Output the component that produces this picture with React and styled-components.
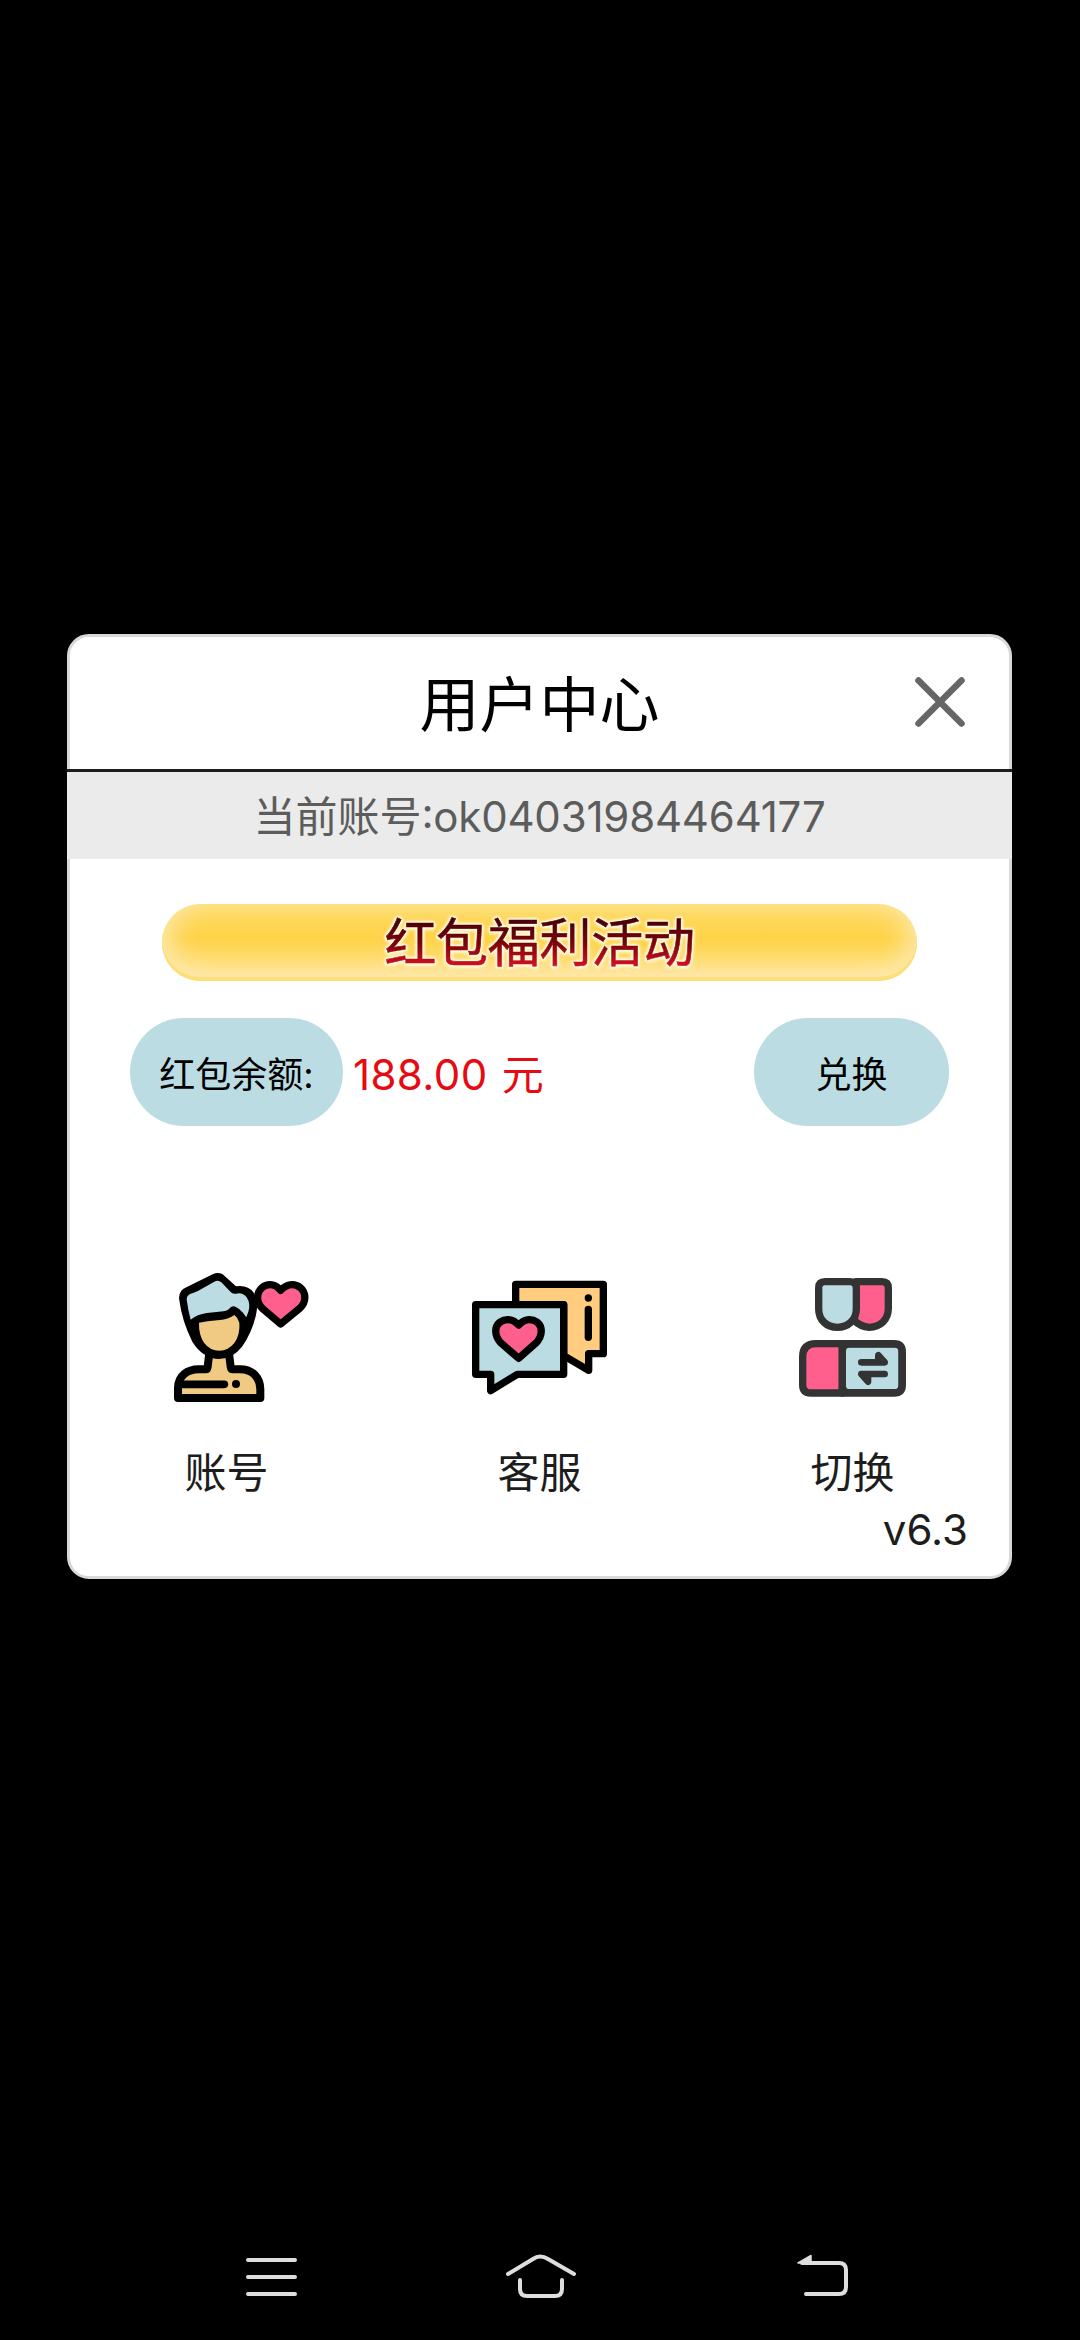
import styled, { createGlobalStyle } from "styled-components";

const GlobalStyle = createGlobalStyle`
  * {
    box-sizing: border-box;
  }
  body {
    margin: 0;
    background-color: #000;
    font-family: Inter, "Noto Sans CJK SC", sans-serif;
  }
`;

const Screen = styled.div`
  width: 1080px;
  height: 2340px;
  display: flex;
  flex-direction: column;
  align-items: center;
  justify-content: space-between;
  padding-top: 634px;
  background-color: #000;
`;

const Card = styled.div`
  width: 945px;
  height: 945px;
  margin-right: 1px;
  display: flex;
  flex-direction: column;
  border: 3px solid #d9d9d9;
  border-radius: 22px;
  background-color: #fff;
`;

const Header = styled.div`
  height: 135px;
  margin: 0 -3px;
  padding: 0 47px;
  display: grid;
  grid-template-columns: 50px 1fr 50px;
  align-items: center;
  border-bottom: 3px solid #1d1d1d;
`;

const Title = styled.div`
  grid-column: 2;
  padding-top: 3px;
  font-size: 60px;
  line-height: 80px;
  text-align: center;
  color: #000;
`;

const CloseButton = styled.button`
  width: 50px;
  height: 50px;
  margin-bottom: 3px;
  padding: 0;
  border: none;
  background: none;
  cursor: pointer;
  svg {
    display: block;
  }
`;

const AccountBar = styled.div`
  height: 87px;
  margin: 0 -3px;
  padding-top: 3px;
  display: flex;
  align-items: center;
  justify-content: center;
  background-color: #ebebeb;
  font-size: 42px;
  line-height: 60px;
  color: #5c5c5c;
`;

const AccountId = styled.span`
  letter-spacing: -0.2px;
  font-feature-settings: "case";
`;

const Banner = styled.div`
  width: 755px;
  height: 77px;
  margin: 45px 0 0 92px;
  padding-top: 3px;
  display: flex;
  align-items: center;
  justify-content: center;
  border-radius: 39px;
  background: linear-gradient(
    #fddd72 0%,
    #fed759 22%,
    #fed348 45%,
    #fedb6b 68%,
    #ffe6a0 93%
  );
  box-shadow: inset 0 -4px 0 #fbe07a, inset 16px -4px 24px -6px #fde7a6,
    inset -16px -4px 24px -6px #fde7a6;
`;

const BannerText = styled.span`
  font-size: 52px;
  line-height: 76px;
  letter-spacing: -0.3px;
  color: transparent;
  -webkit-text-stroke: 0.6px transparent;
  background: linear-gradient(#4c0008 22%, #7c0409 50%, #d0121f 78%);
  background-clip: text;
  filter: drop-shadow(0 0 1px #fffbe8) drop-shadow(0 0 1px #fffbe8)
    drop-shadow(0 0 1px #fff8dc) drop-shadow(0 1px 1px #fff3c4);
`;

const BalanceRow = styled.div`
  margin: 37px 60px 0;
  display: flex;
  align-items: center;
`;

const Pill = styled.div`
  width: ${(props) => props.$width}px;
  height: 108px;
  display: flex;
  align-items: center;
  justify-content: center;
  border-radius: 54px;
  background-color: #bbdce3;
  font-size: 36px;
  color: #000;
`;

const Balance = styled.div`
  flex: 1;
  margin-left: 10px;
  padding-bottom: 2px;
  font-size: 42px;
  letter-spacing: 0.4px;
  word-spacing: 2px;
  color: #e60b12;
`;

const Menu = styled.div`
  margin-top: 134px;
  display: grid;
  grid-template-columns: repeat(3, 1fr);
`;

const MenuItem = styled.div`
  display: flex;
  flex-direction: column;
  align-items: center;
  gap: 33px;
`;

const MenuLabel = styled.div`
  font-size: 42px;
  line-height: 60px;
  color: #1d1d1d;
`;

const Version = styled.div`
  margin: 2px 41px 0 0;
  font-size: 42px;
  line-height: 50px;
  text-align: right;
  color: #1d1d1d;
`;

const NavBar = styled.div`
  width: 1080px;
  height: 126px;
  padding: 26px 0 0 220px;
  display: flex;
  gap: 180px;
`;

const NavIcon = styled.svg`
  width: 90px;
  height: 70px;
  fill: none;
  stroke: #dedede;
  stroke-width: 4;
  stroke-linecap: round;
  stroke-linejoin: round;
`;

const MenuIcon = styled.svg`
  width: 161px;
  height: 150px;
  overflow: visible;
  fill: none;
  stroke: ${(props) => props.$ink || "#000"};
  stroke-width: 22;
  stroke-linecap: round;
  stroke-linejoin: round;
`;

const BLUE = "#bbdce3";
const PINK = "#ff5f8c";
const SKIN = "#f0c982";
const ORANGE = "#ffcc80";

const AccountIcon = () => (
  <MenuIcon viewBox="-42 0 483 450">
    <path
      fill={SKIN}
      strokeWidth="24"
      d="M54 414V385C54 346 84 328 116 328H137Q142 328 143 320L148 280H207L212 320Q213 328 219 328H240C280 328 301 355 301 388V414Z"
    />
    <path strokeWidth="23" d="M66 373H193" />
    <circle cx="228" cy="372" r="12" fill="#000" stroke="none" />
    <path
      fill="#000"
      stroke="none"
      d="M57 115Q57 90 79 82L158 43Q173 35 188 43L228 79Q264 74 281 98Q297 125 288 165Q275 220 246 260Q217 297 177 297Q128 295 97 245Q66 185 57 115Z"
    />
    <path
      fill={BLUE}
      stroke="none"
      d="M80 118Q80 106 92 101Q103 98 115 92L163 65Q174 58 184 67L212 96Q217 103 228 101Q247 96 260 112Q273 132 265 155L259 172Q254 165 249 158Q239 147 229 142Q216 134 207 147Q202 153 190 154Q160 157 140 159Q112 163 92 179Q84 150 80 118Z"
    />
    <path
      fill={SKIN}
      stroke="none"
      d="M117 188Q140 183 172 181Q204 179 223 165Q234 173 238 188Q241 223 223 249Q205 272 178 272Q150 272 132 248Q116 224 117 188Z"
    />
    <path
      fill={PINK}
      d="M362 192L308 146C286 126 290 97 306 83C325 68 347 73 362 91C379 73 402 68 421 83C438 97 441 126 418 146Z"
    />
  </MenuIcon>
);

const ServiceIcon = () => (
  <MenuIcon viewBox="-3 0 483 450">
    <path fill={ORANGE} d="M167 135V73H430V281H386V331L311 287V135Z" />
    <path fill={BLUE} d="M47 134H311V343H172L92 392V343H47Z" />
    <path
      fill={PINK}
      d="M176 295L124 250C101 227 104 199 119 187C140 173 160 178 176 195C192 178 212 173 232 187C247 199 250 227 227 250Z"
    />
    <path d="M385 148V232" />
    <circle cx="385" cy="114" r="11" fill="#000" stroke="none" />
  </MenuIcon>
);

const SwitchIcon = () => (
  <MenuIcon viewBox="-24 0 483 450" $ink="#333">
    <path
      fill={PINK}
      d="M228 65H306Q325 65 325 84V145C325 180 300 202 268 202Q240 200 222 180Z"
    />
    <path
      fill={BLUE}
      d="M116 84Q116 65 135 65H210Q229 65 229 84V146C229 180 204 202 172 202S116 180 116 146Z"
    />
    <path
      fill={PINK}
      d="M108 251H187V399H93Q68 399 68 374V291Q68 251 108 251Z"
    />
    <path
      fill={BLUE}
      d="M187 251H342Q367 251 367 276V374Q367 399 342 399H187Z"
    />
    {/* rounds the inner corners of the blue half */}
    <rect x="192" y="257" width="169" height="136" rx="16" strokeWidth="12" />
    <path
      fill="#333"
      strokeWidth="20"
      d="M244 307H314L295 286V307M314 342H244L264 365V342"
    />
  </MenuIcon>
);

const menuItems = [
  { label: "账号", icon: <AccountIcon /> },
  { label: "客服", icon: <ServiceIcon /> },
  { label: "切换", icon: <SwitchIcon /> },
];

const App = () => {
  return (
    <>
      <GlobalStyle />
      <Screen>
        <Card>
          <Header>
            <Title>用户中心</Title>
            <CloseButton aria-label="关闭">
              <svg width="50" height="50" viewBox="0 0 50 50">
                <path
                  d="M3.5 3.5L46.5 46.5M46.5 3.5L3.5 46.5"
                  stroke="#666"
                  strokeWidth="6.5"
                  strokeLinecap="round"
                />
              </svg>
            </CloseButton>
          </Header>
          <AccountBar>
            当前账号<AccountId>:ok04031984464177</AccountId>
          </AccountBar>
          <Banner>
            <BannerText>红包福利活动</BannerText>
          </Banner>
          <BalanceRow>
            <Pill $width={213}>红包余额:</Pill>
            <Balance>188.00 元</Balance>
            <Pill $width={195}>兑换</Pill>
          </BalanceRow>
          <Menu>
            {menuItems.map((item) => (
              <MenuItem key={item.label}>
                {item.icon}
                <MenuLabel>{item.label}</MenuLabel>
              </MenuItem>
            ))}
          </Menu>
          <Version>v6.3</Version>
        </Card>
        <NavBar>
          <NavIcon viewBox="-16 0 90 70">
            <path d="M12 20H59M12 37H59M12 54H59" />
          </NavIcon>
          <NavIcon viewBox="26 0 90 70">
            <path d="M44 34L69 19Q76 14 84 19L110 34M56 40V49Q56 56 63 56H91Q98 56 98 49V40" />
          </NavIcon>
          <NavIcon viewBox="-4 0 90 70">
            <path d="M38 23H75Q82 23 82 30V47Q82 54 75 54H42" />
            <path d="M34 23L47 15.5V23Z" fill="#dedede" strokeWidth="1.5" />
          </NavIcon>
        </NavBar>
      </Screen>
    </>
  );
};

export default App;
